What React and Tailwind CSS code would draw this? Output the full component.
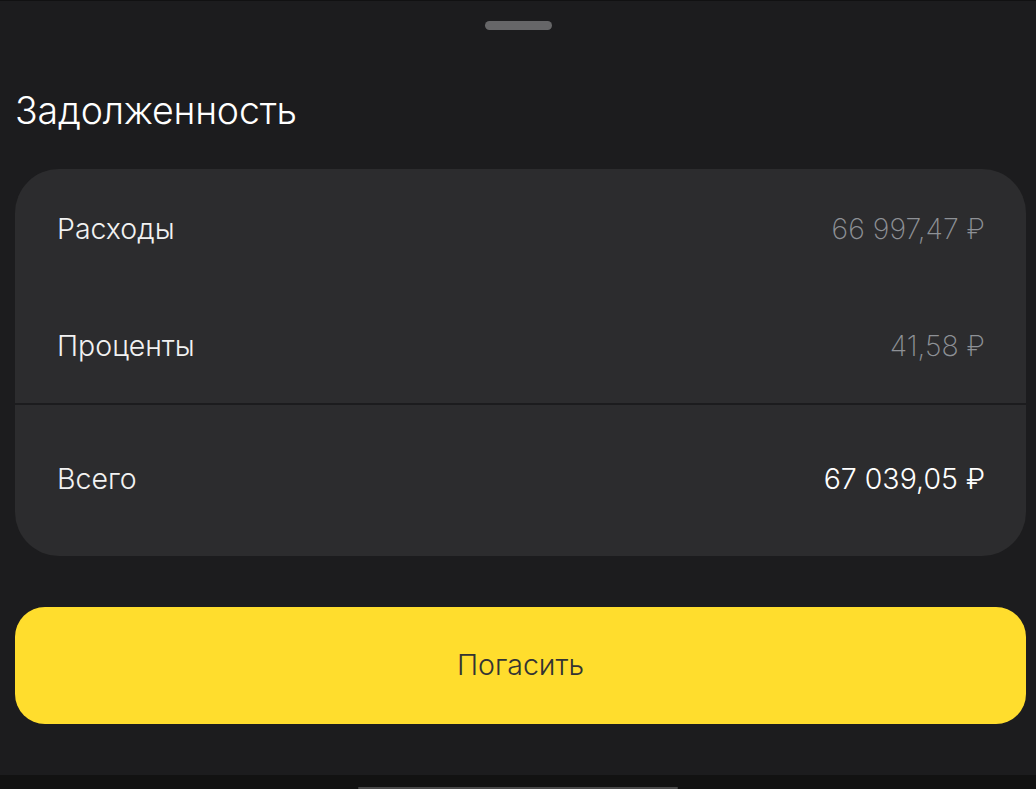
import React from 'react';

const rows = [
  { label: 'Расходы', value: '66 997,47 ₽', h: 'h-[120px]' },
  { label: 'Проценты', value: '41,58 ₽', h: 'h-[114px]' },
];

export default function App() {
  return (
    <div
      className="w-[1036px] h-[789px] bg-[#1c1c1e] flex flex-col overflow-hidden"
      style={{ fontFamily: 'Inter, "Noto Sans", sans-serif' }}
    >
      <div className="h-px bg-[#111112]" />
      <div className="flex justify-center pt-[20px]">
        <div className="w-[67px] h-[9px] rounded-full bg-[#666668]" />
      </div>

      <h1 className="px-[15px] mt-[59px] text-[37.5px] leading-[44px] font-light text-white tracking-[-0.2px]">
        Задолженность
      </h1>

      <div className="ml-[15px] mr-[10px] mt-[36px] rounded-[44px] bg-[#2c2c2e] overflow-hidden">
        {rows.map((r) => (
          <div key={r.label} className={`${r.h} flex items-center justify-between pl-[42px] pr-[41px]`}>
            <span className="text-[28.5px] font-light text-[#f2f2f2]">{r.label}</span>
            <span className="text-[28.5px] font-extralight text-[#8e9196]">{r.value}</span>
          </div>
        ))}
        <div className="h-[2px] bg-[#1c1c1e]" />
        <div className="h-[151px] flex items-center justify-between pl-[42px] pr-[41px] pb-[3px]">
          <span className="text-[28.5px] font-light text-[#f2f2f2]">Всего</span>
          <span className="text-[28.5px] font-light text-white">67 039,05 ₽</span>
        </div>
      </div>

      <button className="ml-[15px] mr-[10px] mt-[51px] h-[117px] rounded-[30px] bg-[#ffdd2d] flex items-center justify-center">
        <span className="text-[28.5px] font-light text-[#333333]">Погасить</span>
      </button>

      <div className="flex-1" />
      <div className="h-[14px] bg-[#121212] flex items-end justify-center">
        <div className="w-[320px] h-[2px] bg-[#4a4a4a] rounded-full" />
      </div>
    </div>
  );
}
